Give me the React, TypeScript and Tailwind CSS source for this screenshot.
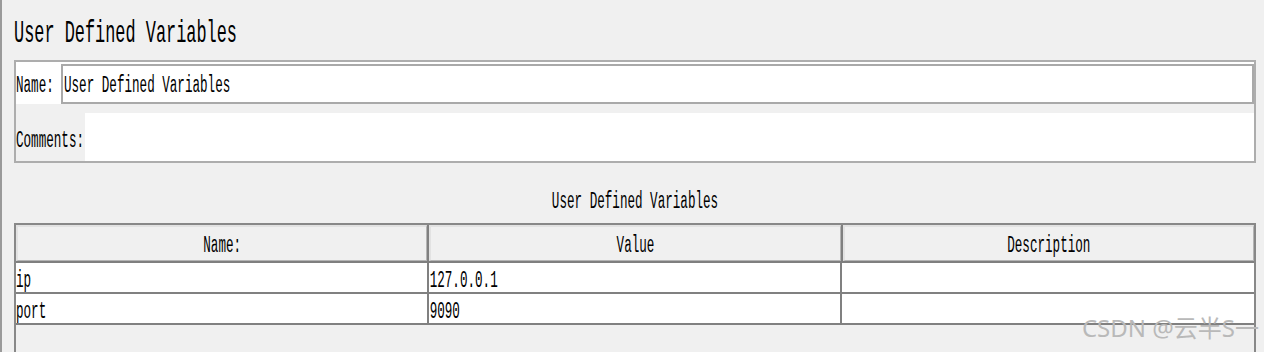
import React from "react";

const mono = { fontFamily: '"Liberation Mono", "DejaVu Sans Mono", monospace' };

function S({ children, dy = "translate-y-[3px]" }: { children: React.ReactNode; dy?: string }) {
  return (
    <span className={`inline-block scale-y-[1.9] ${dy} text-[12.6px] leading-none text-black whitespace-pre`} style={mono}>
      {children}
    </span>
  );
}

function HeaderCell({ children, first }: { children: React.ReactNode; first?: boolean }) {
  return (
    <div className={`flex-1 ${first ? "" : "border-l-2 border-[#808080]"}`}>
      <div className="h-[36px] flex items-center justify-center bg-[#f0f0f0] border-t-2 border-l-2 border-[#e2e2e2] border-r border-r-[#b4b4b4] border-b border-b-[#b4b4b4]">
        <S dy="translate-y-[4px]">{children}</S>
      </div>
    </div>
  );
}

function Cell({ children, first }: { children?: React.ReactNode; first?: boolean }) {
  return (
    <div className={`flex-1 h-full flex items-center bg-white ${first ? "" : "border-l-2 border-[#808080] pl-px"}`}>
      {children ? <S dy="translate-y-[5px]">{children}</S> : null}
    </div>
  );
}

export default function App() {
  return (
    <div className="relative w-[1264px] h-[352px] overflow-hidden bg-[#f0f0f0] border-l-2 border-[#9a9a9a]">
      <div className="h-[60px] pt-[5px] pl-[12px] flex items-center">
        <span className="inline-block scale-y-[1.85] translate-y-[3px] text-[16.9px] leading-none text-black whitespace-pre" style={mono}>
          User Defined Variables
        </span>
      </div>

      <div className="ml-[12px] w-[1242px] h-[103px] border-2 border-[#adadad] flex flex-col">
        <div className="h-[42px] pt-[2px] flex bg-white">
          <div className="w-[45px] flex items-center">
            <S>Name:</S>
          </div>
          <div className="flex-1 h-[40px] border-2 border-[#a9a9a9] bg-white flex items-center pl-px">
            <S>User Defined Variables</S>
          </div>
        </div>
        <div className="h-[9px] bg-[#f0f0f0]" />
        <div className="flex-1 flex">
          <div className="w-[69px] flex items-center bg-[#f0f0f0]">
            <S dy="translate-y-[5px]">Comments:</S>
          </div>
          <div className="flex-1 bg-white" />
        </div>
      </div>

      <div className="h-[60px] pt-[14px] ml-[12px] w-[1242px] flex items-center justify-center">
        <S>User Defined Variables</S>
      </div>

      <div className="ml-[12px] w-[1242px] h-[140px] border-t-2 border-x-2 border-[#888888] bg-[#f0f0f0]">
        <div className="flex border-b-2 border-[#7f7f7f]">
          <HeaderCell first>Name:</HeaderCell>
          <HeaderCell>Value</HeaderCell>
          <HeaderCell>Description</HeaderCell>
        </div>
        <div className="h-[31px] flex border-b-2 border-[#808080]">
          <Cell first>ip</Cell>
          <Cell>127.0.0.1</Cell>
          <Cell />
        </div>
        <div className="h-[31px] flex border-b-2 border-[#808080]">
          <Cell first>port</Cell>
          <Cell>9090</Cell>
          <Cell />
        </div>
      </div>

      <div
        className="absolute right-[5px] top-[316px] text-[24px] leading-none text-[#b9b9b9] whitespace-nowrap"
        style={{ fontFamily: '"Noto Sans", "Noto Sans CJK SC", sans-serif' }}
      >
        CSDN @云半S一
      </div>
    </div>
  );
}
